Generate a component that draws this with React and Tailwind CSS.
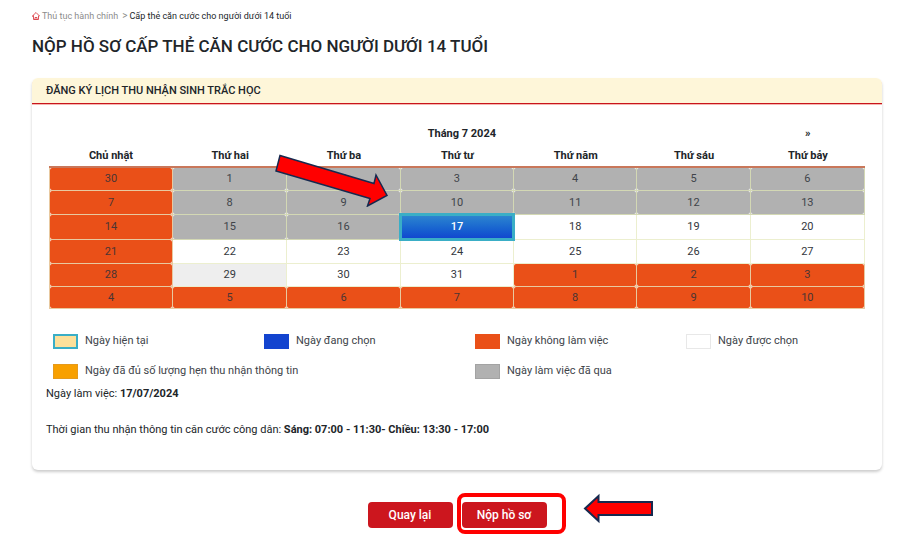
import React from "react";

const WEEKDAYS = ["Chủ nhật", "Thứ hai", "Thứ ba", "Thứ tư", "Thứ năm", "Thứ sáu", "Thứ bảy"];

// o: off day, p: past day, f: free day, h: hovered day, s: selected day
const WEEKS = [
  { height: "h-[22px]", days: [[30, "o"], [1, "p"], [2, "p"], [3, "p"], [4, "p"], [5, "p"], [6, "p"]] },
  { height: "h-[23px]", days: [[7, "o"], [8, "p"], [9, "p"], [10, "p"], [11, "p"], [12, "p"], [13, "p"]] },
  { height: "h-[24px]", days: [[14, "o"], [15, "p"], [16, "p"], [17, "s"], [18, "f"], [19, "f"], [20, "f"]] },
  { height: "h-[23px]", days: [[21, "o"], [22, "f"], [23, "f"], [24, "f"], [25, "f"], [26, "f"], [27, "f"]] },
  { height: "h-[22px]", days: [[28, "o"], [29, "h"], [30, "f"], [31, "f"], [1, "o"], [2, "o"], [3, "o"]] },
  { height: "h-[21px]", days: [[4, "o"], [5, "o"], [6, "o"], [7, "o"], [8, "o"], [9, "o"], [10, "o"]] },
];

const DAY_STYLES = {
  o: "rounded-[2px] bg-[#ea5018] text-[#4a3534]",
  p: "rounded-[2px] bg-[#b1b1b1] text-[#40444a]",
  f: "bg-white text-[#33373d]",
  h: "bg-[#eeeeee] text-[#33373d]",
  s: "bg-linear-to-b from-[#2f86cf] to-[#1344cf] font-medium text-white",
};

const BORDER_STYLES = {
  o: "border-[#e8c9a0]",
  p: "border-[#d3d8b4]",
  f: "border-[#ecefcf]",
  h: "border-[#ecefcf]",
  s: "border-[#ecefcf]",
};

const LEGEND = [
  { label: "Ngày hiện tại", swatch: "border-2 border-[#3aaec6] bg-[#fde09a]", span: "" },
  { label: "Ngày đang chọn", swatch: "bg-[#1344cf]", span: "" },
  { label: "Ngày không làm việc", swatch: "bg-[#ea5018]", span: "" },
  { label: "Ngày được chọn", swatch: "border border-[#e8e8e8] bg-white", span: "" },
  { label: "Ngày đã đủ số lượng hẹn thu nhận thông tin", swatch: "border border-[#e59a1c] bg-[#f8a000]", span: "col-span-2" },
  { label: "Ngày làm việc đã qua", swatch: "border border-[#a3a3a3] bg-[#b1b1b1]", span: "col-span-2" },
];

function HomeIcon() {
  return (
    <svg viewBox="0 0 16 16" className="h-2 w-2 shrink-0" fill="none" stroke="#d9363e" strokeWidth="1.7" strokeLinejoin="round" strokeLinecap="round" aria-hidden="true">
      <path d="M1 8 8 1 15 8h-2v7H3V8Z" />
      <path d="M6 15v-4h4v4" />
    </svg>
  );
}

function Calendar() {
  return (
    <div className="relative">
      <table className="w-full table-fixed border-separate border-spacing-0 text-center text-[11px] leading-4 text-[#212529]">
        <colgroup>
          <col className="w-[15.2%]" />
          <col className="w-[14%]" />
          <col className="w-[13.9%]" />
          <col className="w-[13.9%]" />
          <col className="w-[15.1%]" />
          <col className="w-[13.9%]" />
          <col className="w-[14%]" />
        </colgroup>
        <thead>
          <tr className="h-6">
            <td />
            <th colSpan={5} scope="colgroup" className="p-0 font-bold">Tháng 7 2024</th>
            <td className="p-0">
              <button type="button" aria-label="Tháng sau" className="font-bold">»</button>
            </td>
          </tr>
          <tr className="h-[22px]">
            {WEEKDAYS.map((day) => (
              <th key={day} scope="col" className="border-b-2 border-[#c9775a] p-0 font-bold">{day}</th>
            ))}
          </tr>
        </thead>
        <tbody>
          {WEEKS.map((week, index) => (
            <tr key={index}>
              {week.days.map(([day, kind]) => (
                <td key={day} className={`relative border-r border-b p-0 first:border-l ${BORDER_STYLES[kind]}`}>
                  <button type="button" className={`block w-full ${week.height} ${DAY_STYLES[kind]}`}>{day}</button>
                  {kind === "s" && <span className="pointer-events-none absolute -inset-0.5 z-10 border-3 border-[#3aaec6]" />}
                </td>
              ))}
            </tr>
          ))}
        </tbody>
      </table>
      <svg viewBox="0 0 116 58" className="pointer-events-none absolute top-[27px] left-[27.5%] z-20 h-[58px] w-[116px]" aria-hidden="true">
        <path d="M7 6.500 101 34.500 103 26 114 46.500 94.500 57 97 49.500 3 22Z" fill="#ff0000" stroke="#16294f" strokeWidth="1.5" />
      </svg>
    </div>
  );
}

export default function App() {
  return (
    <main className="bg-white pt-2 pr-[33px] pb-5 pl-8 font-[Roboto,'Noto_Sans',sans-serif] text-[#212529]">
      <nav aria-label="Breadcrumb" className="flex h-4 items-center text-[9px] leading-4">
        <HomeIcon />
        <a href="#thu-tuc" className="ml-0.5 text-[#8c8c8c]">Thủ tục hành chính</a>
        <span className="mr-0.5 ml-1 text-[10px] text-[#8c8c8c]">&gt;</span>
        <a href="#cap-the" aria-current="page">Cấp thẻ căn cước cho người dưới 14 tuổi</a>
      </nav>
      <h1 className="mt-2.5 text-[17px] leading-6 font-medium">NỘP HỒ SƠ CẤP THẺ CĂN CƯỚC CHO NGƯỜI DƯỚI 14 TUỔI</h1>

      <section className="mt-5 rounded-md pb-8 shadow-[0_2px_3px_rgba(0,0,0,0.2)]">
        <h2 className="rounded-t-md border-b border-[#c8141c] bg-[#fef6d9] px-3.5 text-[11px] leading-[25px] font-medium shadow-[0_1px_0_#f5b5b0]">ĐĂNG KÝ LỊCH THU NHẬN SINH TRẮC HỌC</h2>
        <div className="px-[17px] pt-[18px]">
          <Calendar />
        </div>
        <ul className="mt-6 grid grid-cols-[1fr_1fr_1fr_196px] gap-y-3.5 pl-[21px] text-[11px] leading-4 text-[#40444a]">
          {LEGEND.map((item) => (
            <li key={item.label} className={`flex items-center gap-[7px] ${item.span}`}>
              <span className={`h-[15px] w-[25px] shrink-0 ${item.swatch}`} />
              {item.label}
            </li>
          ))}
        </ul>
        <div className="px-3.5 text-[11px] leading-4">
          <p className="mt-[7px]">Ngày làm việc: <strong>17/07/2024</strong></p>
          <p className="mt-5">Thời gian thu nhận thông tin căn cước công dân: <strong>Sáng: 07:00 - 11:30- Chiều: 13:30 - 17:00</strong></p>
        </div>
      </section>

      <div className="mt-8 flex justify-center gap-[9px] text-[12px] leading-4 font-medium text-white">
        <button type="button" className="h-[26px] w-[85px] rounded-[4px] bg-[#cc161e]">Quay lại</button>
        <div className="relative">
          <button type="button" className="h-[26px] w-[85px] rounded-[4px] bg-[#cc161e]">Nộp hồ sơ</button>
          <span className="pointer-events-none absolute -top-[9px] -left-[5px] h-[41px] w-[109px] rounded-lg border-4 border-[#ff0000]" />
          <svg viewBox="0 0 70 32" className="pointer-events-none absolute -top-[9px] left-[121px] h-8 w-[70px]" aria-hidden="true">
            <path d="M2 15.500 15.500 3v6H69v13H15.500v6Z" fill="#ff0000" stroke="#16294f" strokeWidth="2" />
          </svg>
        </div>
      </div>
    </main>
  );
}
